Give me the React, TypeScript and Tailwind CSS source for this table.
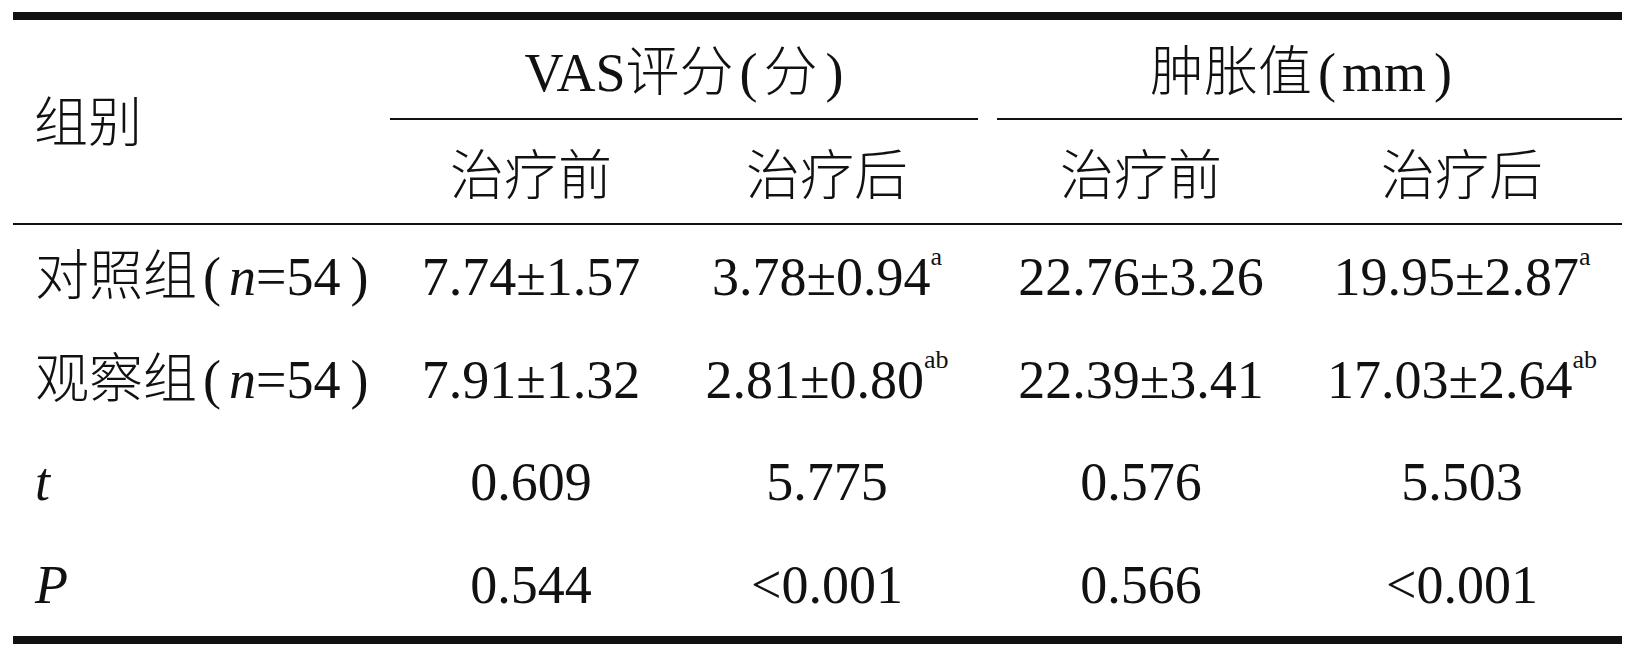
import React from "react";

const Rule = ({ h }: { h: string }) => <div className={`${h} bg-[#111]`} />;

const Open = () => <span className="ml-[6px] mr-[8px]">(</span>;
const Close = () => <span className="ml-[10px]">)</span>;
const HOpen = () => <span className="mx-[6px]">(</span>;
const HClose = () => <span className="ml-[8px]">)</span>;

const Sup = ({ t }: { t: string }) => (
  <sup className="text-[26px] top-[-20px] ml-0">{t}</sup>
);

const cell = "flex items-center justify-center whitespace-nowrap";

type Row = {
  label: React.ReactNode;
  cells: React.ReactNode[];
  h: string;
};

const rows: Row[] = [
  {
    label: (
      <>
        对照组
        <Open />
        <i>n</i>=54
        <Close />
      </>
    ),
    cells: [
      "7.74±1.57",
      <>
        3.78±0.94
        <Sup t="a" />
      </>,
      "22.76±3.26",
      <>
        19.95±2.87
        <Sup t="a" />
      </>,
    ],
    h: "h-[103px]",
  },
  {
    label: (
      <>
        观察组
        <Open />
        <i>n</i>=54
        <Close />
      </>
    ),
    cells: [
      "7.91±1.32",
      <>
        2.81±0.80
        <Sup t="ab" />
      </>,
      "22.39±3.41",
      <>
        17.03±2.64
        <Sup t="ab" />
      </>,
    ],
    h: "h-[103px]",
  },
  {
    label: <i>t</i>,
    cells: ["0.609", "5.775", "0.576", "5.503"],
    h: "h-[102px]",
  },
  {
    label: <i>P</i>,
    cells: ["0.544", "<0.001", "0.566", "<0.001"],
    h: "h-[103px]",
  },
];

export default function App() {
  return (
    <div className="w-[1640px] h-[655px] bg-white pt-[12px] pl-[13px] font-['Liberation_Serif','Noto_Sans_CJK_SC',serif] text-[54px] leading-none text-[#111] font-light">
      <div className="w-[1609px]">
        <Rule h="h-[8px]" />
        <div className="grid grid-cols-[375px_286px_306px_322px_320px]">
          <div className="row-span-3 flex items-center pl-[21px] pt-[4px]">组别</div>
          <div className={`col-span-2 h-[98px] pt-[8px] ${cell}`}>
            VAS评分
            <HOpen />
            分
            <HClose />
          </div>
          <div className={`col-span-2 h-[98px] pt-[8px] ${cell}`}>
            肿胀值
            <HOpen />
            mm
            <HClose />
          </div>
          <div className="col-span-2 h-[2px] bg-[#111] mx-[2px]" />
          <div className="col-span-2 h-[2px] bg-[#111] ml-[17px]" />
          <div className={`h-[103px] pt-[10px] ${cell}`}>治疗前</div>
          <div className={`h-[103px] pt-[10px] ${cell}`}>治疗后</div>
          <div className={`h-[103px] pt-[10px] ${cell}`}>治疗前</div>
          <div className={`h-[103px] pt-[10px] ${cell}`}>治疗后</div>
        </div>
        <Rule h="h-[2px]" />
        {rows.map((r, i) => (
          <div
            key={i}
            className={`grid grid-cols-[375px_286px_306px_322px_320px] ${r.h}`}
          >
            <div className="flex items-center pl-[22px] whitespace-nowrap">
              {r.label}
            </div>
            {r.cells.map((c, j) => (
              <div key={j} className={cell}>
                {c}
              </div>
            ))}
          </div>
        ))}
        <Rule h="h-[8px]" />
      </div>
    </div>
  );
}
